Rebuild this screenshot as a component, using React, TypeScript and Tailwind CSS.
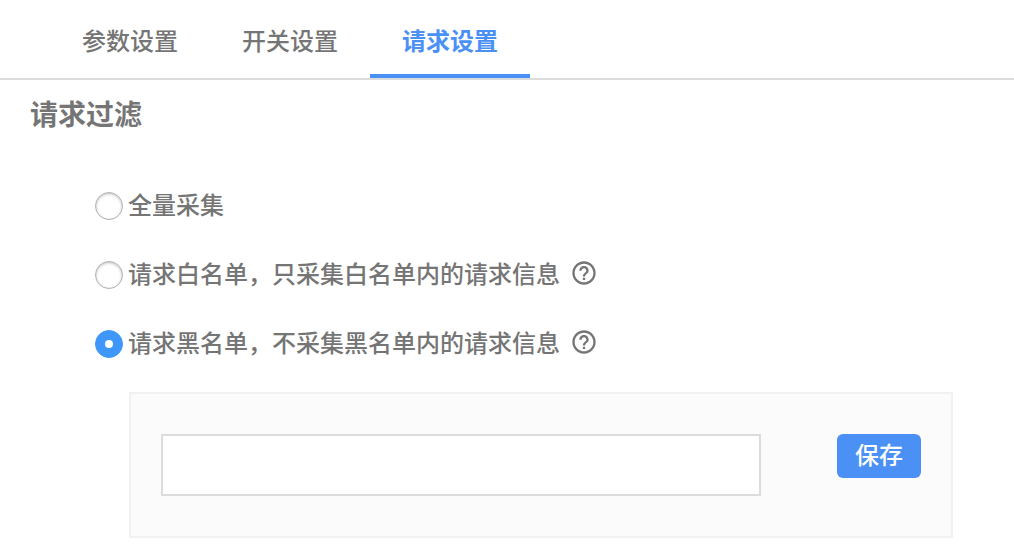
import { useState } from "react";
import { MdHelpOutline } from "react-icons/md";

const tabs = ["参数设置", "开关设置", "请求设置"];

const filters = [
  { value: "all", label: "全量采集", help: "" },
  {
    value: "white",
    label: "请求白名单，只采集白名单内的请求信息",
    help: "白名单说明",
  },
  {
    value: "black",
    label: "请求黑名单，不采集黑名单内的请求信息",
    help: "黑名单说明",
  },
];

function App() {
  const [tab, setTab] = useState("请求设置");
  const [filter, setFilter] = useState("black");
  const [url, setUrl] = useState("");

  return (
    <div className="bg-white text-2xl font-medium text-[#757575] font-['Noto_Sans_CJK_SC',sans-serif]">
      <nav className="flex h-20 border-b-2 border-[#dcdcdc] pl-[50px]">
        {tabs.map((name) => (
          <button
            key={name}
            type="button"
            onClick={() => setTab(name)}
            className={
              name === tab
                ? "w-40 border-b-4 border-[#4a90f5] pt-1.5 font-bold text-[#4a90f5]"
                : "w-40 border-b-4 border-transparent pt-1.5"
            }
          >
            {name}
          </button>
        ))}
      </nav>

      <main className="py-[15px]">
        <h2 className="pl-[30px] text-[28px] leading-9 font-bold">请求过滤</h2>

        <div className="mt-[61px] flex flex-col gap-[41px] pl-[95px]">
          {filters.map((item) => (
            <div key={item.value} className="flex h-7 items-center">
              <label className="flex items-center gap-[5px]">
                <input
                  type="radio"
                  name="filter"
                  value={item.value}
                  checked={filter === item.value}
                  onChange={() => setFilter(item.value)}
                  className="grid size-7 shrink-0 appearance-none place-items-center rounded-full border border-[#b0b0b0] bg-white shadow-[inset_0_1px_3px_#00000040] checked:border-[#3f97fa] checked:bg-[#3f97fa] checked:shadow-none checked:before:size-2 checked:before:rounded-full checked:before:bg-white checked:before:content-['']"
                />
                <span className="pb-1">{item.label}</span>
              </label>
              {item.help && (
                <button type="button" aria-label={item.help} className="ml-[10px] pb-1">
                  <MdHelpOutline className="size-7" />
                </button>
              )}
            </div>
          ))}
        </div>

        <div className="mt-[34px] mr-[61px] ml-[129px] flex items-start justify-between border-2 border-[#f1f1f1] bg-[#fbfbfb] px-[30px] py-10">
          <input
            type="text"
            aria-label="请求名单"
            value={url}
            onChange={(e) => setUrl(e.target.value)}
            className="mr-[76px] h-[62px] min-w-0 flex-1 border-2 border-[#dcdcdc] bg-white px-4 outline-none"
          />
          <button
            type="button"
            className="h-11 w-[84px] rounded-md bg-[#4a90f5] pb-1 text-white"
          >
            保存
          </button>
        </div>
      </main>
    </div>
  );
}

export default App;
